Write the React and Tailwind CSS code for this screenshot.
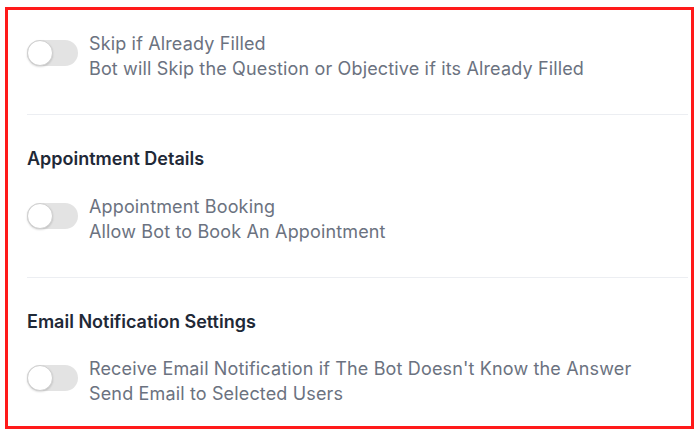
import React from "react";

function Toggle() {
  return (
    <div className="relative mt-[9px] h-[26px] w-[51px] shrink-0 rounded-full bg-[#e3e3e3]">
      <div className="absolute left-0 top-0 h-[26px] w-[26px] rounded-full border border-[#cfcfcf] bg-white shadow-[0_1px_2px_rgba(0,0,0,0.15)]" />
    </div>
  );
}

function Row({ title, desc }) {
  return (
    <div className="flex items-start gap-[11px]">
      <Toggle />
      <div className="flex flex-col text-[18px] leading-[25px] tracking-[0.15px] text-[#6b7280]">
        <span>{title}</span>
        <span>{desc}</span>
      </div>
    </div>
  );
}

export default function App() {
  return (
    <div
      className="h-[433px] w-[699px] bg-white pl-[5px] pt-[7px]"
      style={{ fontFamily: "Inter, 'Noto Sans', sans-serif" }}
    >
      <div className="flex h-[422px] w-[689px] flex-col border-[3px] border-[#ff1a1a] pl-[19px] pr-[3px]">
        <div className="pt-[21px] pb-[33px] border-b border-[#eceef2]">
          <Row
            title="Skip if Already Filled"
            desc="Bot will Skip the Question or Objective if its Already Filled"
          />
        </div>
        <div className="pt-[32px] pb-[33px] border-b border-[#eceef2]">
          <div className="text-[18px] font-semibold leading-[24px] text-[#1f2937]">
            Appointment Details
          </div>
          <div className="mt-[23px]">
            <Row title="Appointment Booking" desc="Allow Bot to Book An Appointment" />
          </div>
        </div>
        <div className="pt-[32px]">
          <div className="text-[18px] font-semibold leading-[24px] text-[#1f2937]">
            Email Notification Settings
          </div>
          <div className="mt-[22px]">
            <Row
              title="Receive Email Notification if The Bot Doesn't Know the Answer"
              desc="Send Email to Selected Users"
            />
          </div>
        </div>
      </div>
    </div>
  );
}
